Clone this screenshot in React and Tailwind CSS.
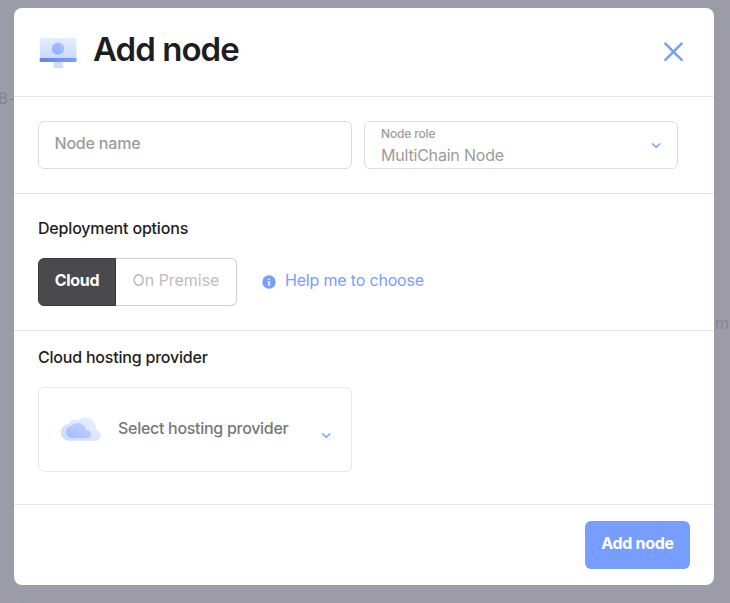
import React from "react";

function MonitorIcon() {
  return (
    <svg width="38" height="32" viewBox="0 0 38 32" className="block shrink-0">
      <defs>
        <linearGradient id="screen" x1="0" y1="0" x2="0" y2="1">
          <stop offset="0" stopColor="#e6edff" />
          <stop offset="1" stopColor="#cad8ff" />
        </linearGradient>
        <linearGradient id="dot" x1="0" y1="1" x2="1" y2="0">
          <stop offset="0" stopColor="#8dabff" />
          <stop offset="1" stopColor="#aec4ff" />
        </linearGradient>
        <linearGradient id="bar" x1="0" y1="0" x2="1" y2="0">
          <stop offset="0" stopColor="#6487e4" />
          <stop offset="1" stopColor="#7da0ff" />
        </linearGradient>
      </defs>
      <path d="M15.2 24h8l1.2 7h-10z" fill="#cfdcff" />
      <rect x="0.8" y="1" width="36.7" height="21" rx="0.6" fill="url(#screen)" />
      <path d="M0.7 21h36.8v3.2q0 .8-.8.8H1.5q-.8 0-.8-.8z" fill="url(#bar)" />
      <circle cx="19" cy="11.6" r="6.1" fill="url(#dot)" />
    </svg>
  );
}

function CloudIcon() {
  return (
    <svg width="41" height="24" viewBox="0 0 41 24" className="block shrink-0">
      <defs>
        <linearGradient id="cloudBack" x1="0" y1="1" x2="1" y2="0">
          <stop offset="0" stopColor="#c8d7ff" />
          <stop offset="0.6" stopColor="#e1e9ff" />
          <stop offset="1" stopColor="#e6edff" />
        </linearGradient>
        <linearGradient id="cloudFront" x1="0" y1="1" x2="1" y2="0">
          <stop offset="0" stopColor="#a3bbff" />
          <stop offset="1" stopColor="#c3d3ff" />
        </linearGradient>
      </defs>
      <path
        d="M8.500 23.800A8.400 8.400 0 0 1 7.800 7C9 3.400 13.500 1.200 17.500 3.300C19.500 1.200 22 .2 24.700 .2C31 .2 35.800 6 34.800 12.700A5.600 5.600 0 0 1 35 23.800Z"
        fill="url(#cloudBack)"
      />
      <path
        d="M10 21A6.200 6.200 0 0 1 10.800 8.800C12.500 7 14.500 6 17.300 6C21.500 6 24.700 9.200 25.200 13.500A3.800 3.800 0 0 1 27 21Z"
        fill="url(#cloudFront)"
      />
    </svg>
  );
}

function Chevron() {
  return (
    <svg width="10" height="8" viewBox="0 0 10 8" className="block shrink-0" fill="none">
      <path d="M1.200 2.500L5.200 6.200L9.200 2.500" stroke="#779dff" strokeWidth="1.500" />
    </svg>
  );
}

export default function App() {
  return (
    <div className="relative h-[603px] w-[730px] overflow-hidden bg-[#9d9ca7] px-[14px] pt-2 font-['Inter',sans-serif] text-base leading-6 tracking-[-0.18px] text-[#1e1e20]">
      <span className="absolute -left-[2px] top-[86px] text-[#85848f]">8-</span>
      <span className="absolute left-[715px] top-[311px] text-[#85848f]">m</span>

      <div className="relative flex h-[577px] w-[700px] flex-col rounded-lg bg-white shadow-[0_2px_16px_rgba(140,160,210,0.3)]">
        <header className="flex h-[89px] items-start border-b border-[#e5e5e5] pl-[25px] pr-[30px]">
          <div className="pt-[29px]">
            <MonitorIcon />
          </div>
          <h1 className="ml-[16px] mt-[21px] text-[33px] font-semibold leading-10 tracking-[-0.95px]">Add node</h1>
          <button className="ml-auto mt-[34px]" aria-label="Close">
            <svg width="20" height="20" viewBox="0 0 20 20" className="block" fill="none">
              <path
                d="M1.400 1.700L17.600 17.900M17.600 1.700L1.400 17.900"
                stroke="#779dff"
                strokeWidth="2.500"
                strokeLinecap="round"
              />
            </svg>
          </button>
        </header>

        <section className="flex h-[97px] gap-3 border-b border-[#e5e5e5] pl-6 pt-6">
          <div className="h-12 w-[314px] rounded-md border border-[#dcdcdc] pl-[15.500px] pt-[9px] font-medium tracking-[-0.2px] text-[#9c9c9c]">
            Node name
          </div>
          <div className="flex h-12 w-[314px] items-center justify-between rounded-md border border-[#dcdcdc] px-4">
            <div className="self-start pt-1 text-[#9c9c9c]">
              <div className="text-[12px] font-medium leading-4 tracking-[-0.15px]">Node role</div>
              <div className="mt-[1px] tracking-[-0.2px]">MultiChain Node</div>
            </div>
            <Chevron />
          </div>
        </section>

        <section className="h-[137px] border-b border-[#e5e5e5] pl-6 pt-[22px]">
          <h2 className="font-medium">Deployment options</h2>
          <div className="mt-[18px] flex">
            <button className="h-12 w-[78px] rounded-l-md border border-[#38373b] bg-[#4a494e] pb-1 font-bold tracking-[-0.35px] text-white">
              Cloud
            </button>
            <button className="h-12 w-[121px] rounded-r-md border border-l-0 border-[#d0d0d0] pb-1 tracking-[-0.03px] text-[#bdbdbd]">
              On Premise
            </button>
            <a className="ml-[25px] flex h-12 items-center text-[#779dff]">
              <svg width="14" height="14" viewBox="0 0 14 14" className="block">
                <circle cx="7" cy="7" r="6.700" fill="#779dff" />
                <path d="M6.200 3.400h1.600v1.500H6.200zM5.600 6h2.200v3.700h.7v.9H5.600v-.9h.7V6.900h-.7z" fill="#fff" />
              </svg>
              <span className="ml-[9px] pb-1">Help me to choose</span>
            </a>
          </div>
        </section>

        <section className="h-[174px] border-b border-[#e5e5e5] pl-6 pt-[14px]">
          <h2 className="font-medium tracking-[-0.21px]">Cloud hosting provider</h2>
          <div className="mt-[18px] flex h-[85px] w-[314px] items-start rounded-md border border-[#e7e7e7] pl-[22px] pr-5">
            <div className="pt-[29px]">
              <CloudIcon />
            </div>
            <span className="ml-[16px] mt-[28px] font-medium tracking-[-0.29px] text-[#777777]">
              Select hosting provider
            </span>
            <div className="ml-auto pt-[43px]">
              <Chevron />
            </div>
          </div>
        </section>

        <footer className="flex justify-end pr-6 pt-4">
          <button className="h-12 w-[105px] rounded-md bg-[#779dff] pb-1 font-bold tracking-[-0.32px] text-white">
            Add node
          </button>
        </footer>
      </div>
    </div>
  );
}
